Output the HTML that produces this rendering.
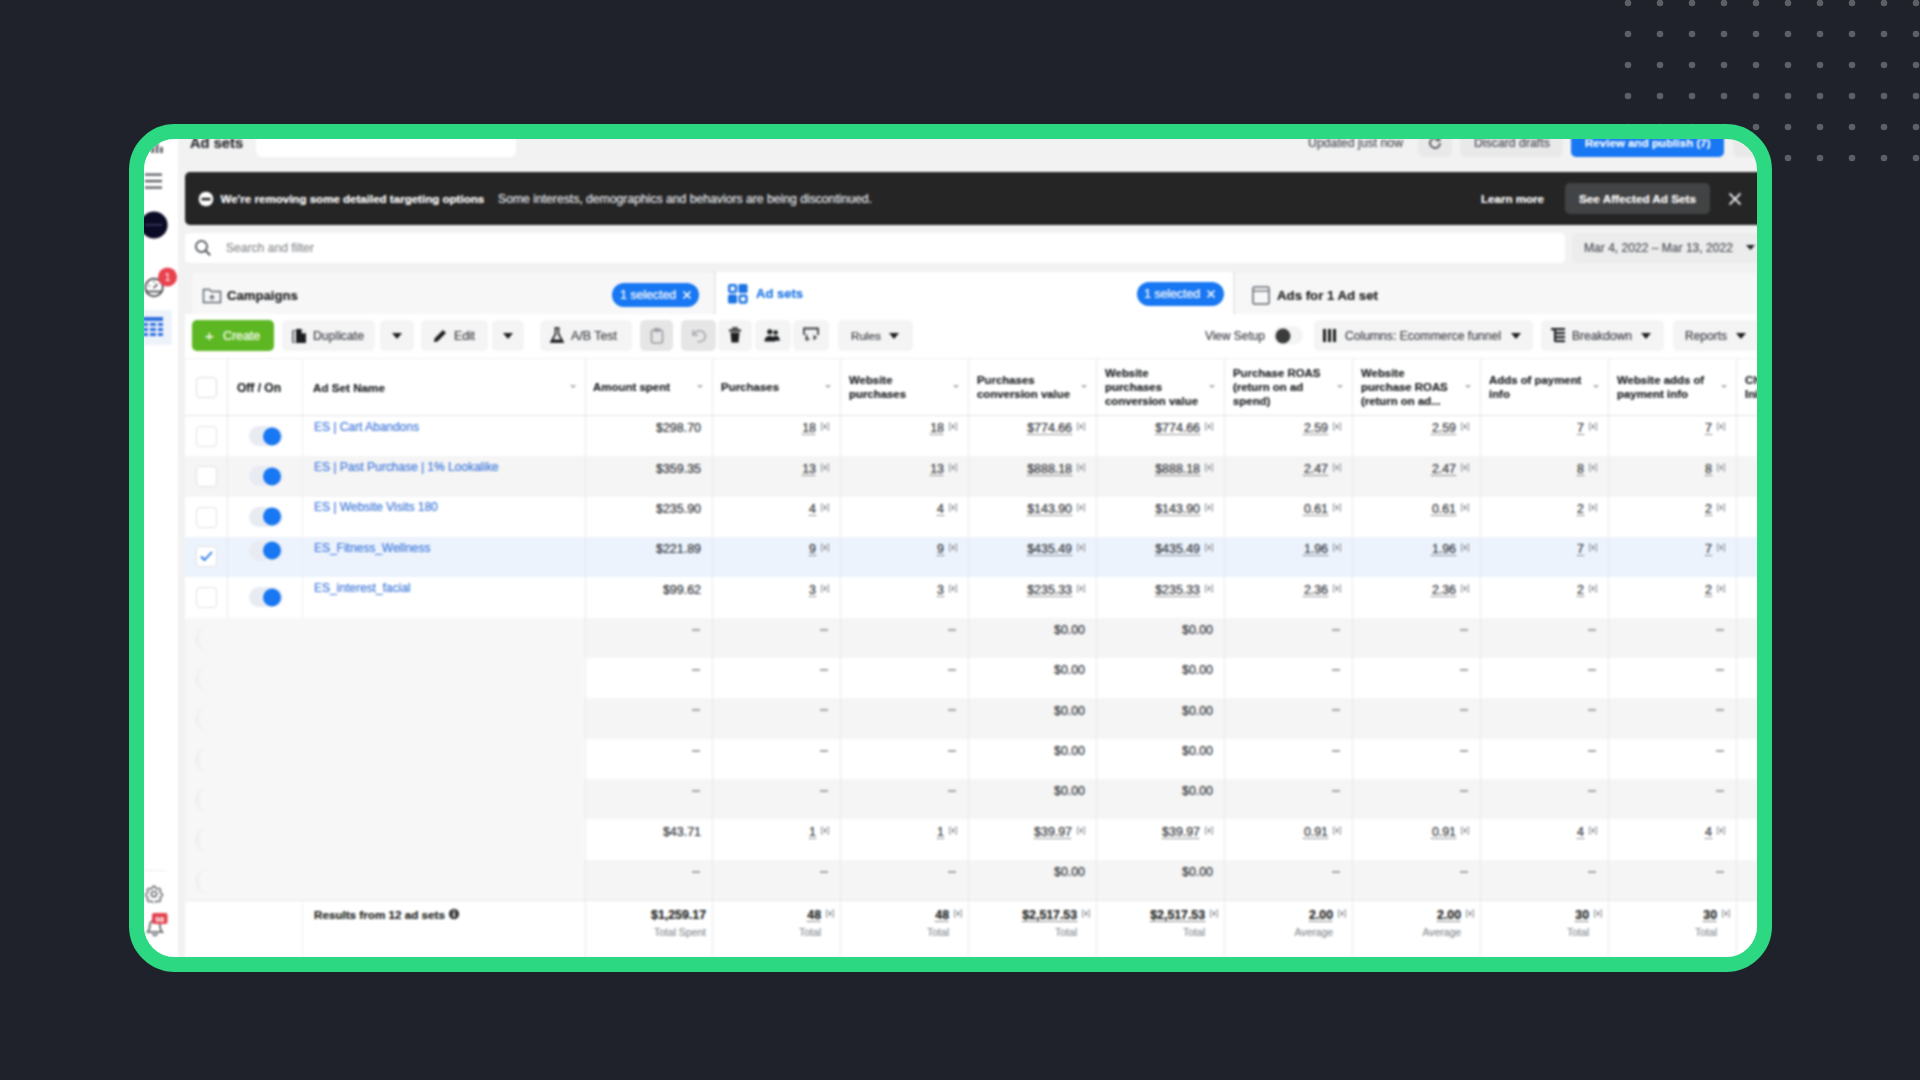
<!DOCTYPE html><html><head><meta charset="utf-8"><style>
*{margin:0;padding:0;box-sizing:border-box}
html,body{width:1920px;height:1080px;overflow:hidden;background:#1f222a;font-family:"Liberation Sans",sans-serif}
.a{position:absolute}
.t{position:absolute;white-space:nowrap;-webkit-text-stroke:0.2px currentColor}
#frame{position:absolute;left:129px;top:124px;width:1643px;height:848px;border:15px solid #2dd882;border-radius:46px;overflow:hidden;background:#f2f2f2}
#pg{position:absolute;left:-144px;top:-139px;width:1920px;height:1080px;filter:blur(0.8px)}
.u{text-decoration:underline dotted;text-underline-offset:2px}
</style></head><body>
<svg class="a" style="left:0;top:0" width="1920" height="200" viewBox="0 0 1920 200"><g fill="#5c5f64"><circle cx="1628" cy="3" r="3.3"/><circle cx="1660" cy="3" r="3.3"/><circle cx="1692" cy="3" r="3.3"/><circle cx="1724" cy="3" r="3.3"/><circle cx="1756" cy="3" r="3.3"/><circle cx="1788" cy="3" r="3.3"/><circle cx="1820" cy="3" r="3.3"/><circle cx="1852" cy="3" r="3.3"/><circle cx="1884" cy="3" r="3.3"/><circle cx="1916" cy="3" r="3.3"/><circle cx="1628" cy="34" r="3.3"/><circle cx="1660" cy="34" r="3.3"/><circle cx="1692" cy="34" r="3.3"/><circle cx="1724" cy="34" r="3.3"/><circle cx="1756" cy="34" r="3.3"/><circle cx="1788" cy="34" r="3.3"/><circle cx="1820" cy="34" r="3.3"/><circle cx="1852" cy="34" r="3.3"/><circle cx="1884" cy="34" r="3.3"/><circle cx="1916" cy="34" r="3.3"/><circle cx="1628" cy="65" r="3.3"/><circle cx="1660" cy="65" r="3.3"/><circle cx="1692" cy="65" r="3.3"/><circle cx="1724" cy="65" r="3.3"/><circle cx="1756" cy="65" r="3.3"/><circle cx="1788" cy="65" r="3.3"/><circle cx="1820" cy="65" r="3.3"/><circle cx="1852" cy="65" r="3.3"/><circle cx="1884" cy="65" r="3.3"/><circle cx="1916" cy="65" r="3.3"/><circle cx="1628" cy="96" r="3.3"/><circle cx="1660" cy="96" r="3.3"/><circle cx="1692" cy="96" r="3.3"/><circle cx="1724" cy="96" r="3.3"/><circle cx="1756" cy="96" r="3.3"/><circle cx="1788" cy="96" r="3.3"/><circle cx="1820" cy="96" r="3.3"/><circle cx="1852" cy="96" r="3.3"/><circle cx="1884" cy="96" r="3.3"/><circle cx="1916" cy="96" r="3.3"/><circle cx="1628" cy="127" r="3.3"/><circle cx="1660" cy="127" r="3.3"/><circle cx="1692" cy="127" r="3.3"/><circle cx="1724" cy="127" r="3.3"/><circle cx="1756" cy="127" r="3.3"/><circle cx="1788" cy="127" r="3.3"/><circle cx="1820" cy="127" r="3.3"/><circle cx="1852" cy="127" r="3.3"/><circle cx="1884" cy="127" r="3.3"/><circle cx="1916" cy="127" r="3.3"/><circle cx="1628" cy="158" r="3.3"/><circle cx="1660" cy="158" r="3.3"/><circle cx="1692" cy="158" r="3.3"/><circle cx="1724" cy="158" r="3.3"/><circle cx="1756" cy="158" r="3.3"/><circle cx="1788" cy="158" r="3.3"/><circle cx="1820" cy="158" r="3.3"/><circle cx="1852" cy="158" r="3.3"/><circle cx="1884" cy="158" r="3.3"/><circle cx="1916" cy="158" r="3.3"/></g></svg>
<svg width="0" height="0" style="position:absolute"><filter id="bl" x="0" y="0" width="100%" height="100%"><feGaussianBlur stdDeviation="1.5"/></filter></svg>
<div id="frame"><div id="pg">
<div class="a" style="left:144px;top:139px;width:34px;height:818px;background:#ffffff;border-radius:0px;"></div>
<svg class="a" style="left:150px;top:139px" width="14" height="15" viewBox="0 0 14 15"><g fill="#6b6f76"><rect x="1" y="6" width="3" height="8"/><rect x="5.5" y="3" width="3" height="11"/><rect x="10" y="8" width="3" height="6"/></g></svg>
<svg class="a" style="left:144px;top:172px" width="20" height="18" viewBox="0 0 20 18"><g fill="#55585e"><rect x="1" y="1.5" width="17" height="2.2"/><rect x="1" y="8" width="17" height="2.2"/><rect x="1" y="14.5" width="17" height="2.2"/></g></svg>
<svg class="a" style="left:140px;top:210px" width="30" height="30" viewBox="0 0 30 30"><circle cx="14" cy="15" r="13.6" fill="#0c0b26"/><rect x="5" y="14.4" width="17" height="1" fill="#55557a"/></svg>
<svg class="a" style="left:142px;top:266px" width="40" height="36" viewBox="0 0 40 36"><circle cx="12" cy="21.5" r="8.8" fill="none" stroke="#3a3d42" stroke-width="1.7"/><path d="M3.8 25.5h16.4" stroke="#3a3d42" stroke-width="1.6"/><path d="M11.5 22l4-3.8" stroke="#3a3d42" stroke-width="1.5"/><path d="M6.5 19.5l1.4.6M12 15v1.5" stroke="#3a3d42" stroke-width="1.2"/><circle cx="25.5" cy="11" r="9.5" fill="#e8424f"/><text x="25.5" y="15" font-size="10" fill="#fff" text-anchor="middle" font-family="Liberation Sans">1</text></svg>
<div class="a" style="left:144px;top:310px;width:28px;height:35px;background:#eef3fb;border-radius:0px;"></div>
<svg class="a" style="left:143px;top:317px" width="22" height="20" viewBox="0 0 22 20"><g fill="#2d6fe0"><rect x="0" y="0" width="20" height="4"/><rect x="0" y="6" width="5" height="3"/><rect x="7" y="6" width="6" height="3"/><rect x="15" y="6" width="5" height="3"/><rect x="0" y="11" width="5" height="3"/><rect x="7" y="11" width="6" height="3"/><rect x="15" y="11" width="5" height="3"/><rect x="0" y="16" width="5" height="3"/><rect x="7" y="16" width="6" height="3"/><rect x="15" y="16" width="5" height="3"/></g></svg>
<div class="a" style="left:145px;top:870px;width:21px;height:1px;background:#ececec;border-radius:0px;"></div>
<svg class="a" style="left:145px;top:884.5px" width="18" height="18" viewBox="0 0 18 18"><g transform="scale(0.9)"><path d="M8.6 1.5h2.8l.5 2.3 1.6.8 2.1-1.1 2 2-1.1 2.1.7 1.6 2.3.5v2.8l-2.3.5-.7 1.6 1.1 2.1-2 2-2.1-1.1-1.6.7-.5 2.3h-2.8l-.5-2.3-1.6-.7-2.1 1.1-2-2 1.1-2.1-.7-1.6-2.3-.5v-2.8l2.3-.5.7-1.6-1.1-2.1 2-2 2.1 1.1 1.6-.8z" fill="none" stroke="#55585d" stroke-width="1.4"/><circle cx="10" cy="10" r="3" fill="none" stroke="#55585d" stroke-width="1.5"/></g></svg>
<svg class="a" style="left:144px;top:910px" width="30" height="30" viewBox="0 0 30 30"><path d="M3.5 22c1.8-1.5 2.2-3.5 2.4-7a5 5 0 0 1 10 0c.2 3.5.6 5.5 2.4 7z" fill="none" stroke="#55585d" stroke-width="1.6"/><path d="M9 23.5a2 2 0 0 0 4 0" stroke="#55585d" stroke-width="1.4" fill="none"/><rect x="8" y="3" width="15.5" height="11" rx="2" fill="#e2404c"/><text x="15.7" y="11.5" font-size="8" fill="#fff" text-anchor="middle" font-family="Liberation Sans" font-weight="700">98</text></svg>
<div class="t" style="left:190px;top:134.77px;font-size:14.7px;line-height:17.64px;font-weight:700;color:#2b2d31;">Ad sets</div>
<div class="a" style="left:256px;top:125px;width:260px;height:32px;background:#ffffff;border-radius:6px;"></div>
<div class="t" style="left:1308px;top:135.81px;font-size:12.3px;line-height:14.76px;font-weight:400;color:#4b4f56;">Updated just now</div>
<div class="a" style="left:1418px;top:125px;width:34px;height:32px;background:#e9e9e9;border-radius:5px;"></div>
<svg class="a" style="left:1427px;top:135px" width="16" height="16" viewBox="0 0 16 16"><path d="M13 8a5 5 0 1 1-1.5-3.6" fill="none" stroke="#55585e" stroke-width="1.8"/><path d="M12.5 1.5v4h-4" fill="none" stroke="#55585e" stroke-width="1.6"/></svg>
<div class="a" style="left:1460px;top:125px;width:103px;height:32px;background:#e9e9e9;border-radius:5px;"></div>
<div class="t" style="left:1474px;top:135.81px;font-size:12.3px;line-height:14.76px;font-weight:400;color:#4b4f56;">Discard drafts</div>
<div class="a" style="left:1571px;top:125px;width:153px;height:32px;background:#1877f2;border-radius:5px;"></div>
<div class="t" style="left:1585px;top:136.20px;font-size:11.6px;line-height:13.92px;font-weight:700;color:#ffffff;">Review and publish (7)</div>
<div class="a" style="left:1733px;top:125px;width:67px;height:32px;background:#e9e9e9;border-radius:5px;"></div>
<div class="a" style="left:185px;top:172px;width:1615px;height:53px;background:#252525;border-radius:5px;"></div>
<svg class="a" style="left:198px;top:191px" width="16" height="16" viewBox="0 0 16 16"><circle cx="8" cy="8" r="7.3" fill="#fff"/><rect x="3.5" y="6.8" width="9" height="2.6" fill="#252525"/></svg>
<div class="t" style="left:220.5px;top:192.53px;font-size:11.56px;line-height:13.87px;font-weight:700;color:#ffffff;">We&#39;re removing some detailed targeting options</div>
<div class="t" style="left:498px;top:192.17px;font-size:12.19px;line-height:14.63px;font-weight:400;color:#e4e6eb;">Some interests, demographics and behaviors are being discontinued.</div>
<div class="t" style="left:1481px;top:192.52px;font-size:11.57px;line-height:13.88px;font-weight:700;color:#ffffff;">Learn more</div>
<div class="a" style="left:1565px;top:183px;width:145px;height:31px;background:#424344;border-radius:5px;"></div>
<div class="t" style="left:1579px;top:192.44px;font-size:11.72px;line-height:14.06px;font-weight:700;color:#ffffff;">See Affected Ad Sets</div>
<svg class="a" style="left:1728px;top:192px" width="14" height="14" viewBox="0 0 14 14"><path d="M1.5 1.5l11 11M12.5 1.5l-11 11" stroke="#e4e6eb" stroke-width="1.8"/></svg>
<div class="a" style="left:185px;top:233px;width:1380px;height:30px;background:#ffffff;border-radius:5px;"></div>
<svg class="a" style="left:194px;top:239px" width="18" height="18" viewBox="0 0 18 18"><circle cx="7.5" cy="7.5" r="5.6" fill="none" stroke="#4b4f56" stroke-width="1.7"/><path d="M11.6 11.6l4.6 4.6" stroke="#4b4f56" stroke-width="2"/></svg>
<div class="t" style="left:226px;top:241.02px;font-size:12.1px;line-height:14.52px;font-weight:400;color:#8a8d91;">Search and filter</div>
<div class="a" style="left:1572px;top:233px;width:228px;height:30px;background:#ececec;border-radius:5px;"></div>
<div class="t" style="left:1584px;top:241.04px;font-size:12.07px;line-height:14.48px;font-weight:400;color:#4b4f56;">Mar 4, 2022 &#8211; Mar 13, 2022</div>
<svg class="a" style="left:1745px;top:244px" width="12" height="8" viewBox="0 0 12 8"><path d="M1 1h9l-4.5 5z" fill="#1c1e21"/></svg>
<div class="a" style="left:716px;top:272px;width:517px;height:44px;background:#ffffff;border-radius:0px;"></div>
<div class="a" style="left:192px;top:273px;width:522px;height:41px;background:#f7f7f7;border-radius:4px;"></div>
<div class="a" style="left:1235px;top:273px;width:565px;height:41px;background:#f7f7f7;border-radius:4px;"></div>
<div class="a" style="left:714px;top:272px;width:2px;height:44px;background:#eaeaea;border-radius:0px;"></div>
<div class="a" style="left:1233px;top:272px;width:2px;height:44px;background:#eaeaea;border-radius:0px;"></div>
<svg class="a" style="left:201px;top:285px" width="22" height="20" viewBox="0 0 22 20"><path d="M2.5 4.5h6l2 2h9v11h-17z" fill="none" stroke="#606770" stroke-width="1.5"/><path d="M11 15.5l0-5M8.5 13l2.5-2.5 2.5 2.5" fill="none" stroke="#606770" stroke-width="1.3"/></svg>
<div class="t" style="left:227px;top:287.63px;font-size:13.17px;line-height:15.8px;font-weight:700;color:#1c1e21;">Campaigns</div>
<div class="a" style="left:612px;top:283px;width:87px;height:24px;background:#1877f2;border-radius:12px;"></div>
<div class="t" style="left:620px;top:288.11px;font-size:12.3px;line-height:14.76px;font-weight:400;color:#ffffff;">1 selected</div>
<svg class="a" style="left:681px;top:289px" width="12" height="12" viewBox="0 0 12 12"><path d="M2.5 2.5l7 7M9.5 2.5l-7 7" stroke="#fff" stroke-width="1.6"/></svg>
<svg class="a" style="left:727px;top:283px" width="22" height="22" viewBox="0 0 22 22"><g fill="#1b74e4"><rect x="2.2" y="2.2" width="6.8" height="6.8" rx="1.2" fill="none" stroke="#1b74e4" stroke-width="2.4"/><rect x="11.5" y="1" width="9" height="9" rx="1.5"/><rect x="1" y="11.5" width="9" height="9" rx="1.5"/><rect x="12.7" y="12.7" width="6.8" height="6.8" rx="1.2" fill="none" stroke="#1b74e4" stroke-width="2.4"/></g></svg>
<div class="t" style="left:756px;top:286.22px;font-size:13.0px;line-height:15.6px;font-weight:700;color:#1b74e4;">Ad sets</div>
<div class="a" style="left:1137px;top:282px;width:87px;height:24px;background:#1877f2;border-radius:12px;"></div>
<div class="t" style="left:1144px;top:287.11px;font-size:12.3px;line-height:14.76px;font-weight:400;color:#ffffff;">1 selected</div>
<svg class="a" style="left:1205px;top:288px" width="12" height="12" viewBox="0 0 12 12"><path d="M2.5 2.5l7 7M9.5 2.5l-7 7" stroke="#fff" stroke-width="1.6"/></svg>
<svg class="a" style="left:1252px;top:286px" width="18" height="19" viewBox="0 0 18 19"><rect x="1" y="1" width="16" height="17" rx="1.5" fill="none" stroke="#606770" stroke-width="1.5"/><path d="M1 5h16" stroke="#606770" stroke-width="1.3"/></svg>
<div class="t" style="left:1277px;top:287.58px;font-size:13.24px;line-height:15.89px;font-weight:700;color:#1c1e21;">Ads for 1 Ad set</div>
<div class="a" style="left:185px;top:314px;width:1615px;height:44px;background:#ffffff;border-radius:0px;"></div>
<div class="a" style="left:192px;top:320px;width:82px;height:31px;background:#5db722;border-radius:5px;"></div>
<div class="t" style="left:205px;top:327.10px;font-size:15px;line-height:18.0px;font-weight:400;color:#ffffff;">+</div>
<div class="t" style="left:223px;top:328.56px;font-size:12.4px;line-height:14.88px;font-weight:400;color:#ffffff;">Create</div>
<div class="a" style="left:282px;top:320px;width:93px;height:31px;background:#f4f4f4;border-radius:5px;"></div>
<div class="a" style="left:380px;top:320px;width:34px;height:31px;background:#f4f4f4;border-radius:5px;"></div>
<svg class="a" style="left:289px;top:326px" width="20" height="20" viewBox="0 0 20 20"><path d="M4 4.5v12" stroke="#3a3d42" stroke-width="1.4" fill="none"/><path d="M4 4.5h2M4 16.5h2" stroke="#3a3d42" stroke-width="1.2"/><path d="M7 3h6l4 4v10h-10z" fill="#1c1e21"/><path d="M13 3v4h4" fill="#fff" stroke="#fff" stroke-width=".6"/></svg>
<div class="t" style="left:313px;top:328.65px;font-size:12.23px;line-height:14.68px;font-weight:400;color:#3e4147;">Duplicate</div>
<svg class="a" style="left:391px;top:332px" width="12" height="8" viewBox="0 0 12 8"><path d="M1 1h10l-5 6z" fill="#1c1e21"/></svg>
<div class="a" style="left:421px;top:320px;width:67px;height:31px;background:#f4f4f4;border-radius:5px;"></div>
<div class="a" style="left:492px;top:320px;width:32px;height:31px;background:#f4f4f4;border-radius:5px;"></div>
<svg class="a" style="left:431px;top:327px" width="18" height="18" viewBox="0 0 18 18"><path d="M3 15l1-4 8-8 3 3-8 8z" fill="#1c1e21"/><path d="M3 15l1-4 3 3z" fill="#1c1e21"/></svg>
<div class="t" style="left:454px;top:328.67px;font-size:12.2px;line-height:14.64px;font-weight:400;color:#3e4147;">Edit</div>
<svg class="a" style="left:502px;top:332px" width="12" height="8" viewBox="0 0 12 8"><path d="M1 1h10l-5 6z" fill="#1c1e21"/></svg>
<div class="a" style="left:540px;top:320px;width:92px;height:31px;background:#f4f4f4;border-radius:5px;"></div>
<svg class="a" style="left:549px;top:326px" width="16" height="19" viewBox="0 0 16 19"><path d="M5.5 2h5M6.5 2v6l-4.5 8h12l-4.5-8v-6" fill="none" stroke="#1c1e21" stroke-width="1.6"/><path d="M3.5 13.5h9l1.5 3h-12z" fill="#1c1e21"/></svg>
<div class="t" style="left:571px;top:328.55px;font-size:12.41px;line-height:14.89px;font-weight:400;color:#3e4147;">A/B Test</div>
<div class="a" style="left:640px;top:320px;width:33px;height:31px;background:#e6e6e6;border-radius:5px;"></div>
<svg class="a" style="left:650px;top:327px" width="14" height="17" viewBox="0 0 14 17"><rect x="1.5" y="3" width="11" height="13" rx="2" fill="none" stroke="#9a9da2" stroke-width="1.6"/><rect x="4" y="1" width="6" height="4" rx="1" fill="#9a9da2"/></svg>
<div class="a" style="left:681px;top:320px;width:35px;height:31px;background:#e6e6e6;border-radius:5px;"></div>
<svg class="a" style="left:690px;top:327px" width="18" height="17" viewBox="0 0 18 17"><path d="M3 3v5h5" fill="none" stroke="#a3a6ab" stroke-width="1.4"/><path d="M3.5 8a6 5.5 0 1 1 4 6.5" fill="none" stroke="#a3a6ab" stroke-width="1.6"/></svg>
<div class="a" style="left:718px;top:320px;width:34px;height:31px;background:#f4f4f4;border-radius:5px;"></div>
<svg class="a" style="left:727px;top:326px" width="16" height="18" viewBox="0 0 16 18"><path d="M2 4.5h12" stroke="#1c1e21" stroke-width="2"/><path d="M6 3.5v-1.5h4v1.5" fill="none" stroke="#1c1e21" stroke-width="1.6"/><path d="M3.5 6.5h9l-1 10h-7z" fill="#1c1e21"/></svg>
<div class="a" style="left:755px;top:320px;width:36px;height:31px;background:#f4f4f4;border-radius:5px;"></div>
<svg class="a" style="left:763px;top:326px" width="18" height="18" viewBox="0 0 18 18"><g fill="#1c1e21"><circle cx="6.8" cy="5.8" r="2.6"/><circle cx="12.6" cy="6.5" r="2.3"/><path d="M1.5 15.5c0-3.5 2-5.5 5.3-5.5s5.3 2 5.3 5.5z"/><path d="M9.5 11.5c1-1.3 2-1.8 3.3-1.8 2.5 0 4 2 4 5h-5.5z"/></g></svg>
<div class="a" style="left:793px;top:320px;width:36px;height:31px;background:#f4f4f4;border-radius:5px;"></div>
<svg class="a" style="left:802px;top:326px" width="18" height="18" viewBox="0 0 18 18"><path d="M2 9V2.5h14V9" fill="none" stroke="#3a3d42" stroke-width="1.8"/><path d="M4.5 8.5v4.5h3" fill="none" stroke="#3a3d42" stroke-width="1.6"/><path d="M5.5 15.5l-2.5-2.5 2.5-2.5z" fill="#3a3d42"/><path d="M11.5 8.5l3.5 3-3.5 3z" fill="#3a3d42"/></svg>
<div class="a" style="left:838px;top:320px;width:75px;height:31px;background:#f4f4f4;border-radius:5px;"></div>
<div class="t" style="left:851px;top:328.93px;font-size:11.73px;line-height:14.08px;font-weight:400;color:#3e4147;">Rules</div>
<svg class="a" style="left:888px;top:332px" width="12" height="8" viewBox="0 0 12 8"><path d="M1 1h10l-5 6z" fill="#1c1e21"/></svg>
<div class="t" style="left:1205px;top:328.84px;font-size:11.9px;line-height:14.28px;font-weight:400;color:#3e4147;">View Setup</div>
<div class="a" style="left:1273px;top:326px;width:30px;height:19px;background:#f4f4f4;border-radius:10px;"></div>
<svg class="a" style="left:1274px;top:327px" width="18" height="18" viewBox="0 0 18 18"><circle cx="9" cy="9" r="7.5" fill="#3a3b3c"/></svg>
<div class="a" style="left:1314px;top:320px;width:219px;height:31px;background:#f4f4f4;border-radius:5px;"></div>
<svg class="a" style="left:1322px;top:328px" width="17" height="15" viewBox="0 0 17 15"><g fill="#1c1e21"><rect x="1" y="1" width="3" height="13"/><rect x="6" y="1" width="3" height="13"/><rect x="11" y="1" width="3" height="13"/></g></svg>
<div class="t" style="left:1345px;top:328.70px;font-size:12.15px;line-height:14.58px;font-weight:400;color:#3e4147;">Columns: Ecommerce funnel</div>
<svg class="a" style="left:1510px;top:332px" width="12" height="8" viewBox="0 0 12 8"><path d="M1 1h10l-5 6z" fill="#1c1e21"/></svg>
<div class="a" style="left:1541px;top:320px;width:123px;height:31px;background:#f4f4f4;border-radius:5px;"></div>
<svg class="a" style="left:1550px;top:327px" width="17" height="17" viewBox="0 0 17 17"><g fill="#1c1e21"><rect x="1" y="1" width="14" height="2.2"/><rect x="4" y="5" width="11" height="2.2"/><rect x="6" y="9" width="9" height="2.2"/><rect x="6" y="13" width="9" height="2.2"/><rect x="4" y="3" width="2" height="12"/></g></svg>
<div class="t" style="left:1572px;top:328.78px;font-size:11.99px;line-height:14.39px;font-weight:400;color:#3e4147;">Breakdown</div>
<svg class="a" style="left:1640px;top:332px" width="12" height="8" viewBox="0 0 12 8"><path d="M1 1h10l-5 6z" fill="#1c1e21"/></svg>
<div class="a" style="left:1673px;top:320px;width:127px;height:31px;background:#f4f4f4;border-radius:5px;"></div>
<div class="t" style="left:1685px;top:328.78px;font-size:12.0px;line-height:14.4px;font-weight:400;color:#3e4147;">Reports</div>
<svg class="a" style="left:1735px;top:332px" width="12" height="8" viewBox="0 0 12 8"><path d="M1 1h10l-5 6z" fill="#1c1e21"/></svg>
<div class="a" style="left:185px;top:358px;width:1615px;height:599px;background:#ffffff;border-radius:0px;"></div>
<div class="a" style="left:185px;top:456.33px;width:1615px;height:40.33000000000004px;background:#f5f5f5;border-radius:0px;"></div>
<div class="a" style="left:185px;top:536.99px;width:1615px;height:40.33000000000004px;background:#ecf3fd;border-radius:0px;"></div>
<div class="a" style="left:185px;top:617.65px;width:1615px;height:40.33000000000004px;background:#f5f5f5;border-radius:0px;"></div>
<div class="a" style="left:185px;top:698.31px;width:1615px;height:40.33000000000004px;background:#f5f5f5;border-radius:0px;"></div>
<div class="a" style="left:185px;top:778.97px;width:1615px;height:40.32999999999993px;background:#f5f5f5;border-radius:0px;"></div>
<div class="a" style="left:185px;top:859.63px;width:1615px;height:40.33000000000004px;background:#f5f5f5;border-radius:0px;"></div>
<div class="a" style="left:226.5px;top:358px;width:1.0px;height:542px;background:#e9e9e9;border-radius:0px;"></div>
<div class="a" style="left:301.5px;top:358px;width:1.0px;height:599px;background:#efefef;border-radius:0px;"></div>
<div class="a" style="left:584.5px;top:358px;width:1.0px;height:599px;background:#e9e9e9;border-radius:0px;"></div>
<div class="a" style="left:711.5px;top:358px;width:1.0px;height:599px;background:#e9e9e9;border-radius:0px;"></div>
<div class="a" style="left:839.5px;top:358px;width:1.0px;height:599px;background:#e9e9e9;border-radius:0px;"></div>
<div class="a" style="left:967.5px;top:358px;width:1.0px;height:599px;background:#e9e9e9;border-radius:0px;"></div>
<div class="a" style="left:1095.5px;top:358px;width:1.0px;height:599px;background:#e9e9e9;border-radius:0px;"></div>
<div class="a" style="left:1223.5px;top:358px;width:1.0px;height:599px;background:#e9e9e9;border-radius:0px;"></div>
<div class="a" style="left:1351.5px;top:358px;width:1.0px;height:599px;background:#e9e9e9;border-radius:0px;"></div>
<div class="a" style="left:1479.5px;top:358px;width:1.0px;height:599px;background:#e9e9e9;border-radius:0px;"></div>
<div class="a" style="left:1607.5px;top:358px;width:1.0px;height:599px;background:#e9e9e9;border-radius:0px;"></div>
<div class="a" style="left:1735.5px;top:358px;width:1.0px;height:599px;background:#e9e9e9;border-radius:0px;"></div>
<div class="a" style="left:1863.5px;top:358px;width:1.0px;height:599px;background:#e9e9e9;border-radius:0px;"></div>
<div class="a" style="left:185px;top:617.65px;width:399px;height:283.35px;background:#f7f7f7;border-radius:0px;"></div>
<div class="a" style="left:196px;top:625.65px;width:64px;height:26.0px;background:transparent;border-radius:14px;border-left:2px solid #ebebeb;filter:blur(1px)"></div>
<div class="a" style="left:196px;top:665.98px;width:64px;height:26.0px;background:transparent;border-radius:14px;border-left:2px solid #ebebeb;filter:blur(1px)"></div>
<div class="a" style="left:196px;top:706.31px;width:64px;height:26.0px;background:transparent;border-radius:14px;border-left:2px solid #ebebeb;filter:blur(1px)"></div>
<div class="a" style="left:196px;top:746.64px;width:64px;height:26.0px;background:transparent;border-radius:14px;border-left:2px solid #ebebeb;filter:blur(1px)"></div>
<div class="a" style="left:196px;top:786.97px;width:64px;height:26.0px;background:transparent;border-radius:14px;border-left:2px solid #ebebeb;filter:blur(1px)"></div>
<div class="a" style="left:196px;top:827.3px;width:64px;height:26.0px;background:transparent;border-radius:14px;border-left:2px solid #ebebeb;filter:blur(1px)"></div>
<div class="a" style="left:196px;top:867.63px;width:64px;height:26.0px;background:transparent;border-radius:14px;border-left:2px solid #ebebeb;filter:blur(1px)"></div>
<div class="a" style="left:185px;top:415px;width:1615px;height:1px;background:#e3e3e3;border-radius:0px;"></div>
<div class="a" style="left:185px;top:357.5px;width:1615px;height:1.0px;background:#efefef;border-radius:0px;"></div>
<div class="a" style="left:185px;top:900px;width:1615px;height:1px;background:#e8e8e8;border-radius:0px;"></div>
<div class="a" style="left:196px;top:377px;width:21px;height:21px;background:#ffffff;border-radius:4px;border:1.5px solid #dcdcdc"></div>
<div class="t" style="left:237px;top:380.98px;font-size:12.0px;line-height:14.4px;font-weight:700;color:#1c1e21;">Off / On</div>
<div class="t" style="left:313px;top:381.17px;font-size:11.67px;line-height:14.0px;font-weight:700;color:#1c1e21;">Ad Set Name</div>
<div class="t" style="left:593px;top:381.28px;font-size:11.46px;line-height:13.75px;font-weight:700;color:#1c1e21;">Amount spent</div>
<div class="t" style="left:721px;top:381.28px;font-size:11.47px;line-height:13.76px;font-weight:700;color:#1c1e21;">Purchases</div>
<div class="t" style="left:849px;top:374.32px;font-size:11.4px;line-height:13.68px;font-weight:700;color:#1c1e21;">Website</div>
<div class="t" style="left:849px;top:388.32px;font-size:11.4px;line-height:13.68px;font-weight:700;color:#1c1e21;">purchases</div>
<div class="t" style="left:977px;top:374.32px;font-size:11.4px;line-height:13.68px;font-weight:700;color:#1c1e21;">Purchases</div>
<div class="t" style="left:977px;top:388.32px;font-size:11.4px;line-height:13.68px;font-weight:700;color:#1c1e21;">conversion value</div>
<div class="t" style="left:1105px;top:367.32px;font-size:11.4px;line-height:13.68px;font-weight:700;color:#1c1e21;">Website</div>
<div class="t" style="left:1105px;top:381.32px;font-size:11.4px;line-height:13.68px;font-weight:700;color:#1c1e21;">purchases</div>
<div class="t" style="left:1105px;top:395.32px;font-size:11.4px;line-height:13.68px;font-weight:700;color:#1c1e21;">conversion value</div>
<div class="t" style="left:1233px;top:367.32px;font-size:11.4px;line-height:13.68px;font-weight:700;color:#1c1e21;">Purchase ROAS</div>
<div class="t" style="left:1233px;top:381.32px;font-size:11.4px;line-height:13.68px;font-weight:700;color:#1c1e21;">(return on ad</div>
<div class="t" style="left:1233px;top:395.32px;font-size:11.4px;line-height:13.68px;font-weight:700;color:#1c1e21;">spend)</div>
<div class="t" style="left:1361px;top:367.32px;font-size:11.4px;line-height:13.68px;font-weight:700;color:#1c1e21;">Website</div>
<div class="t" style="left:1361px;top:381.32px;font-size:11.4px;line-height:13.68px;font-weight:700;color:#1c1e21;">purchase ROAS</div>
<div class="t" style="left:1361px;top:395.32px;font-size:11.4px;line-height:13.68px;font-weight:700;color:#1c1e21;">(return on ad...</div>
<div class="t" style="left:1489px;top:374.32px;font-size:11.4px;line-height:13.68px;font-weight:700;color:#1c1e21;">Adds of payment</div>
<div class="t" style="left:1489px;top:388.32px;font-size:11.4px;line-height:13.68px;font-weight:700;color:#1c1e21;">info</div>
<div class="t" style="left:1617px;top:374.32px;font-size:11.4px;line-height:13.68px;font-weight:700;color:#1c1e21;">Website adds of</div>
<div class="t" style="left:1617px;top:388.32px;font-size:11.4px;line-height:13.68px;font-weight:700;color:#1c1e21;">payment info</div>
<div class="t" style="left:1745px;top:374.32px;font-size:11.4px;line-height:13.68px;font-weight:700;color:#1c1e21;">Checkouts</div>
<div class="t" style="left:1745px;top:388.32px;font-size:11.4px;line-height:13.68px;font-weight:700;color:#1c1e21;">Initiated</div>
<svg class="a" style="left:569px;top:384px" width="8" height="6" viewBox="0 0 8 6"><path d="M1 1h6l-3 3.5z" fill="#b0b3b8"/></svg>
<svg class="a" style="left:696px;top:384px" width="8" height="6" viewBox="0 0 8 6"><path d="M1 1h6l-3 3.5z" fill="#b0b3b8"/></svg>
<svg class="a" style="left:824px;top:384px" width="8" height="6" viewBox="0 0 8 6"><path d="M1 1h6l-3 3.5z" fill="#b0b3b8"/></svg>
<svg class="a" style="left:952px;top:384px" width="8" height="6" viewBox="0 0 8 6"><path d="M1 1h6l-3 3.5z" fill="#b0b3b8"/></svg>
<svg class="a" style="left:1080px;top:384px" width="8" height="6" viewBox="0 0 8 6"><path d="M1 1h6l-3 3.5z" fill="#b0b3b8"/></svg>
<svg class="a" style="left:1208px;top:384px" width="8" height="6" viewBox="0 0 8 6"><path d="M1 1h6l-3 3.5z" fill="#b0b3b8"/></svg>
<svg class="a" style="left:1336px;top:384px" width="8" height="6" viewBox="0 0 8 6"><path d="M1 1h6l-3 3.5z" fill="#b0b3b8"/></svg>
<svg class="a" style="left:1464px;top:384px" width="8" height="6" viewBox="0 0 8 6"><path d="M1 1h6l-3 3.5z" fill="#b0b3b8"/></svg>
<svg class="a" style="left:1592px;top:384px" width="8" height="6" viewBox="0 0 8 6"><path d="M1 1h6l-3 3.5z" fill="#b0b3b8"/></svg>
<svg class="a" style="left:1720px;top:384px" width="8" height="6" viewBox="0 0 8 6"><path d="M1 1h6l-3 3.5z" fill="#b0b3b8"/></svg>
<div class="a" style="left:196px;top:426.0px;width:21px;height:21.0px;background:#ffffff;border-radius:4px;border:1.5px solid #e2e2e2"></div>
<div class="a" style="left:249px;top:426.0px;width:34px;height:20.0px;background:#e8ecf2;border-radius:10px;"></div>
<svg class="a" style="left:261px;top:426px" width="22" height="21" viewBox="0 0 22 21"><circle cx="11" cy="10.5" r="9" fill="#1877f2"/></svg>
<div class="t" style="left:314px;top:419.79px;font-size:11.98px;line-height:14.38px;font-weight:400;color:#3f7bdc;">ES | Cart Abandons</div>
<div class="t" style="right:1219px;top:421.33px;font-size:12.45px;line-height:14.94px;font-weight:400;color:#2f3237;">$298.70</div>
<div class="t" style="right:1104px;top:421.36px;font-size:12.4px;line-height:14.88px;font-weight:400;color:#2f3237;"><span class="u">18</span></div>
<svg class="a" style="left:820px;top:422px" width="10" height="9" viewBox="0 0 10 9"><path d="M1.5 1v7M8.5 1v7M1.5 1h1.5M1.5 8h1.5M7 1h1.5M7 8h1.5" stroke="#8d9096" stroke-width="1" fill="none"/><rect x="3.8" y="2.5" width="2.4" height="4" fill="#8d9096"/></svg>
<div class="t" style="right:976px;top:421.36px;font-size:12.4px;line-height:14.88px;font-weight:400;color:#2f3237;"><span class="u">18</span></div>
<svg class="a" style="left:948px;top:422px" width="10" height="9" viewBox="0 0 10 9"><path d="M1.5 1v7M8.5 1v7M1.5 1h1.5M1.5 8h1.5M7 1h1.5M7 8h1.5" stroke="#8d9096" stroke-width="1" fill="none"/><rect x="3.8" y="2.5" width="2.4" height="4" fill="#8d9096"/></svg>
<div class="t" style="right:848px;top:421.36px;font-size:12.4px;line-height:14.88px;font-weight:400;color:#2f3237;"><span class="u">$774.66</span></div>
<svg class="a" style="left:1076px;top:422px" width="10" height="9" viewBox="0 0 10 9"><path d="M1.5 1v7M8.5 1v7M1.5 1h1.5M1.5 8h1.5M7 1h1.5M7 8h1.5" stroke="#8d9096" stroke-width="1" fill="none"/><rect x="3.8" y="2.5" width="2.4" height="4" fill="#8d9096"/></svg>
<div class="t" style="right:720px;top:421.36px;font-size:12.4px;line-height:14.88px;font-weight:400;color:#2f3237;"><span class="u">$774.66</span></div>
<svg class="a" style="left:1204px;top:422px" width="10" height="9" viewBox="0 0 10 9"><path d="M1.5 1v7M8.5 1v7M1.5 1h1.5M1.5 8h1.5M7 1h1.5M7 8h1.5" stroke="#8d9096" stroke-width="1" fill="none"/><rect x="3.8" y="2.5" width="2.4" height="4" fill="#8d9096"/></svg>
<div class="t" style="right:592px;top:421.36px;font-size:12.4px;line-height:14.88px;font-weight:400;color:#2f3237;"><span class="u">2.59</span></div>
<svg class="a" style="left:1332px;top:422px" width="10" height="9" viewBox="0 0 10 9"><path d="M1.5 1v7M8.5 1v7M1.5 1h1.5M1.5 8h1.5M7 1h1.5M7 8h1.5" stroke="#8d9096" stroke-width="1" fill="none"/><rect x="3.8" y="2.5" width="2.4" height="4" fill="#8d9096"/></svg>
<div class="t" style="right:464px;top:421.36px;font-size:12.4px;line-height:14.88px;font-weight:400;color:#2f3237;"><span class="u">2.59</span></div>
<svg class="a" style="left:1460px;top:422px" width="10" height="9" viewBox="0 0 10 9"><path d="M1.5 1v7M8.5 1v7M1.5 1h1.5M1.5 8h1.5M7 1h1.5M7 8h1.5" stroke="#8d9096" stroke-width="1" fill="none"/><rect x="3.8" y="2.5" width="2.4" height="4" fill="#8d9096"/></svg>
<div class="t" style="right:336px;top:421.36px;font-size:12.4px;line-height:14.88px;font-weight:400;color:#2f3237;"><span class="u">7</span></div>
<svg class="a" style="left:1588px;top:422px" width="10" height="9" viewBox="0 0 10 9"><path d="M1.5 1v7M8.5 1v7M1.5 1h1.5M1.5 8h1.5M7 1h1.5M7 8h1.5" stroke="#8d9096" stroke-width="1" fill="none"/><rect x="3.8" y="2.5" width="2.4" height="4" fill="#8d9096"/></svg>
<div class="t" style="right:208px;top:421.36px;font-size:12.4px;line-height:14.88px;font-weight:400;color:#2f3237;"><span class="u">7</span></div>
<svg class="a" style="left:1716px;top:422px" width="10" height="9" viewBox="0 0 10 9"><path d="M1.5 1v7M8.5 1v7M1.5 1h1.5M1.5 8h1.5M7 1h1.5M7 8h1.5" stroke="#8d9096" stroke-width="1" fill="none"/><rect x="3.8" y="2.5" width="2.4" height="4" fill="#8d9096"/></svg>
<div class="a" style="left:196px;top:466.33px;width:21px;height:21.0px;background:#ffffff;border-radius:4px;border:1.5px solid #e2e2e2"></div>
<div class="a" style="left:249px;top:466.33px;width:34px;height:20.0px;background:#e8ecf2;border-radius:10px;"></div>
<svg class="a" style="left:261px;top:466px" width="22" height="21" viewBox="0 0 22 21"><circle cx="11" cy="10.5" r="9" fill="#1877f2"/></svg>
<div class="t" style="left:314px;top:460.12px;font-size:11.98px;line-height:14.38px;font-weight:400;color:#3f7bdc;">ES | Past Purchase | 1% Lookalike</div>
<div class="t" style="right:1219px;top:461.66px;font-size:12.45px;line-height:14.94px;font-weight:400;color:#2f3237;">$359.35</div>
<div class="t" style="right:1104px;top:461.69px;font-size:12.4px;line-height:14.88px;font-weight:400;color:#2f3237;"><span class="u">13</span></div>
<svg class="a" style="left:820px;top:463px" width="10" height="9" viewBox="0 0 10 9"><path d="M1.5 1v7M8.5 1v7M1.5 1h1.5M1.5 8h1.5M7 1h1.5M7 8h1.5" stroke="#8d9096" stroke-width="1" fill="none"/><rect x="3.8" y="2.5" width="2.4" height="4" fill="#8d9096"/></svg>
<div class="t" style="right:976px;top:461.69px;font-size:12.4px;line-height:14.88px;font-weight:400;color:#2f3237;"><span class="u">13</span></div>
<svg class="a" style="left:948px;top:463px" width="10" height="9" viewBox="0 0 10 9"><path d="M1.5 1v7M8.5 1v7M1.5 1h1.5M1.5 8h1.5M7 1h1.5M7 8h1.5" stroke="#8d9096" stroke-width="1" fill="none"/><rect x="3.8" y="2.5" width="2.4" height="4" fill="#8d9096"/></svg>
<div class="t" style="right:848px;top:461.69px;font-size:12.4px;line-height:14.88px;font-weight:400;color:#2f3237;"><span class="u">$888.18</span></div>
<svg class="a" style="left:1076px;top:463px" width="10" height="9" viewBox="0 0 10 9"><path d="M1.5 1v7M8.5 1v7M1.5 1h1.5M1.5 8h1.5M7 1h1.5M7 8h1.5" stroke="#8d9096" stroke-width="1" fill="none"/><rect x="3.8" y="2.5" width="2.4" height="4" fill="#8d9096"/></svg>
<div class="t" style="right:720px;top:461.69px;font-size:12.4px;line-height:14.88px;font-weight:400;color:#2f3237;"><span class="u">$888.18</span></div>
<svg class="a" style="left:1204px;top:463px" width="10" height="9" viewBox="0 0 10 9"><path d="M1.5 1v7M8.5 1v7M1.5 1h1.5M1.5 8h1.5M7 1h1.5M7 8h1.5" stroke="#8d9096" stroke-width="1" fill="none"/><rect x="3.8" y="2.5" width="2.4" height="4" fill="#8d9096"/></svg>
<div class="t" style="right:592px;top:461.69px;font-size:12.4px;line-height:14.88px;font-weight:400;color:#2f3237;"><span class="u">2.47</span></div>
<svg class="a" style="left:1332px;top:463px" width="10" height="9" viewBox="0 0 10 9"><path d="M1.5 1v7M8.5 1v7M1.5 1h1.5M1.5 8h1.5M7 1h1.5M7 8h1.5" stroke="#8d9096" stroke-width="1" fill="none"/><rect x="3.8" y="2.5" width="2.4" height="4" fill="#8d9096"/></svg>
<div class="t" style="right:464px;top:461.69px;font-size:12.4px;line-height:14.88px;font-weight:400;color:#2f3237;"><span class="u">2.47</span></div>
<svg class="a" style="left:1460px;top:463px" width="10" height="9" viewBox="0 0 10 9"><path d="M1.5 1v7M8.5 1v7M1.5 1h1.5M1.5 8h1.5M7 1h1.5M7 8h1.5" stroke="#8d9096" stroke-width="1" fill="none"/><rect x="3.8" y="2.5" width="2.4" height="4" fill="#8d9096"/></svg>
<div class="t" style="right:336px;top:461.69px;font-size:12.4px;line-height:14.88px;font-weight:400;color:#2f3237;"><span class="u">8</span></div>
<svg class="a" style="left:1588px;top:463px" width="10" height="9" viewBox="0 0 10 9"><path d="M1.5 1v7M8.5 1v7M1.5 1h1.5M1.5 8h1.5M7 1h1.5M7 8h1.5" stroke="#8d9096" stroke-width="1" fill="none"/><rect x="3.8" y="2.5" width="2.4" height="4" fill="#8d9096"/></svg>
<div class="t" style="right:208px;top:461.69px;font-size:12.4px;line-height:14.88px;font-weight:400;color:#2f3237;"><span class="u">8</span></div>
<svg class="a" style="left:1716px;top:463px" width="10" height="9" viewBox="0 0 10 9"><path d="M1.5 1v7M8.5 1v7M1.5 1h1.5M1.5 8h1.5M7 1h1.5M7 8h1.5" stroke="#8d9096" stroke-width="1" fill="none"/><rect x="3.8" y="2.5" width="2.4" height="4" fill="#8d9096"/></svg>
<div class="a" style="left:196px;top:506.65999999999997px;width:21px;height:21.0px;background:#ffffff;border-radius:4px;border:1.5px solid #e2e2e2"></div>
<div class="a" style="left:249px;top:506.65999999999997px;width:34px;height:20.0px;background:#e8ecf2;border-radius:10px;"></div>
<svg class="a" style="left:261px;top:506px" width="22" height="21" viewBox="0 0 22 21"><circle cx="11" cy="10.5" r="9" fill="#1877f2"/></svg>
<div class="t" style="left:314px;top:500.45px;font-size:11.98px;line-height:14.38px;font-weight:400;color:#3f7bdc;">ES | Website Visits 180</div>
<div class="t" style="right:1219px;top:501.99px;font-size:12.45px;line-height:14.94px;font-weight:400;color:#2f3237;">$235.90</div>
<div class="t" style="right:1104px;top:502.02px;font-size:12.4px;line-height:14.88px;font-weight:400;color:#2f3237;"><span class="u">4</span></div>
<svg class="a" style="left:820px;top:503px" width="10" height="9" viewBox="0 0 10 9"><path d="M1.5 1v7M8.5 1v7M1.5 1h1.5M1.5 8h1.5M7 1h1.5M7 8h1.5" stroke="#8d9096" stroke-width="1" fill="none"/><rect x="3.8" y="2.5" width="2.4" height="4" fill="#8d9096"/></svg>
<div class="t" style="right:976px;top:502.02px;font-size:12.4px;line-height:14.88px;font-weight:400;color:#2f3237;"><span class="u">4</span></div>
<svg class="a" style="left:948px;top:503px" width="10" height="9" viewBox="0 0 10 9"><path d="M1.5 1v7M8.5 1v7M1.5 1h1.5M1.5 8h1.5M7 1h1.5M7 8h1.5" stroke="#8d9096" stroke-width="1" fill="none"/><rect x="3.8" y="2.5" width="2.4" height="4" fill="#8d9096"/></svg>
<div class="t" style="right:848px;top:502.02px;font-size:12.4px;line-height:14.88px;font-weight:400;color:#2f3237;"><span class="u">$143.90</span></div>
<svg class="a" style="left:1076px;top:503px" width="10" height="9" viewBox="0 0 10 9"><path d="M1.5 1v7M8.5 1v7M1.5 1h1.5M1.5 8h1.5M7 1h1.5M7 8h1.5" stroke="#8d9096" stroke-width="1" fill="none"/><rect x="3.8" y="2.5" width="2.4" height="4" fill="#8d9096"/></svg>
<div class="t" style="right:720px;top:502.02px;font-size:12.4px;line-height:14.88px;font-weight:400;color:#2f3237;"><span class="u">$143.90</span></div>
<svg class="a" style="left:1204px;top:503px" width="10" height="9" viewBox="0 0 10 9"><path d="M1.5 1v7M8.5 1v7M1.5 1h1.5M1.5 8h1.5M7 1h1.5M7 8h1.5" stroke="#8d9096" stroke-width="1" fill="none"/><rect x="3.8" y="2.5" width="2.4" height="4" fill="#8d9096"/></svg>
<div class="t" style="right:592px;top:502.02px;font-size:12.4px;line-height:14.88px;font-weight:400;color:#2f3237;"><span class="u">0.61</span></div>
<svg class="a" style="left:1332px;top:503px" width="10" height="9" viewBox="0 0 10 9"><path d="M1.5 1v7M8.5 1v7M1.5 1h1.5M1.5 8h1.5M7 1h1.5M7 8h1.5" stroke="#8d9096" stroke-width="1" fill="none"/><rect x="3.8" y="2.5" width="2.4" height="4" fill="#8d9096"/></svg>
<div class="t" style="right:464px;top:502.02px;font-size:12.4px;line-height:14.88px;font-weight:400;color:#2f3237;"><span class="u">0.61</span></div>
<svg class="a" style="left:1460px;top:503px" width="10" height="9" viewBox="0 0 10 9"><path d="M1.5 1v7M8.5 1v7M1.5 1h1.5M1.5 8h1.5M7 1h1.5M7 8h1.5" stroke="#8d9096" stroke-width="1" fill="none"/><rect x="3.8" y="2.5" width="2.4" height="4" fill="#8d9096"/></svg>
<div class="t" style="right:336px;top:502.02px;font-size:12.4px;line-height:14.88px;font-weight:400;color:#2f3237;"><span class="u">2</span></div>
<svg class="a" style="left:1588px;top:503px" width="10" height="9" viewBox="0 0 10 9"><path d="M1.5 1v7M8.5 1v7M1.5 1h1.5M1.5 8h1.5M7 1h1.5M7 8h1.5" stroke="#8d9096" stroke-width="1" fill="none"/><rect x="3.8" y="2.5" width="2.4" height="4" fill="#8d9096"/></svg>
<div class="t" style="right:208px;top:502.02px;font-size:12.4px;line-height:14.88px;font-weight:400;color:#2f3237;"><span class="u">2</span></div>
<svg class="a" style="left:1716px;top:503px" width="10" height="9" viewBox="0 0 10 9"><path d="M1.5 1v7M8.5 1v7M1.5 1h1.5M1.5 8h1.5M7 1h1.5M7 8h1.5" stroke="#8d9096" stroke-width="1" fill="none"/><rect x="3.8" y="2.5" width="2.4" height="4" fill="#8d9096"/></svg>
<div class="a" style="left:196px;top:546.49px;width:21px;height:21.0px;background:#ffffff;border-radius:4px;border:1.5px solid #e2e2e2"></div>
<svg class="a" style="left:199px;top:550.49px" width="15" height="12" viewBox="0 0 15 12"><path d="M2 6.5l3.5 3.5 7.5-8" fill="none" stroke="#1b74e4" stroke-width="1.8"/></svg>
<div class="a" style="left:249px;top:540.99px;width:34px;height:20.0px;background:#e8ecf2;border-radius:10px;"></div>
<svg class="a" style="left:261px;top:540px" width="22" height="21" viewBox="0 0 22 21"><circle cx="11" cy="10.5" r="9" fill="#1877f2"/></svg>
<div class="t" style="left:314px;top:540.78px;font-size:11.98px;line-height:14.38px;font-weight:400;color:#3f7bdc;">ES_Fitness_Wellness</div>
<div class="t" style="right:1219px;top:542.32px;font-size:12.45px;line-height:14.94px;font-weight:400;color:#2f3237;">$221.89</div>
<div class="t" style="right:1104px;top:542.35px;font-size:12.4px;line-height:14.88px;font-weight:400;color:#2f3237;"><span class="u">9</span></div>
<svg class="a" style="left:820px;top:543px" width="10" height="9" viewBox="0 0 10 9"><path d="M1.5 1v7M8.5 1v7M1.5 1h1.5M1.5 8h1.5M7 1h1.5M7 8h1.5" stroke="#8d9096" stroke-width="1" fill="none"/><rect x="3.8" y="2.5" width="2.4" height="4" fill="#8d9096"/></svg>
<div class="t" style="right:976px;top:542.35px;font-size:12.4px;line-height:14.88px;font-weight:400;color:#2f3237;"><span class="u">9</span></div>
<svg class="a" style="left:948px;top:543px" width="10" height="9" viewBox="0 0 10 9"><path d="M1.5 1v7M8.5 1v7M1.5 1h1.5M1.5 8h1.5M7 1h1.5M7 8h1.5" stroke="#8d9096" stroke-width="1" fill="none"/><rect x="3.8" y="2.5" width="2.4" height="4" fill="#8d9096"/></svg>
<div class="t" style="right:848px;top:542.35px;font-size:12.4px;line-height:14.88px;font-weight:400;color:#2f3237;"><span class="u">$435.49</span></div>
<svg class="a" style="left:1076px;top:543px" width="10" height="9" viewBox="0 0 10 9"><path d="M1.5 1v7M8.5 1v7M1.5 1h1.5M1.5 8h1.5M7 1h1.5M7 8h1.5" stroke="#8d9096" stroke-width="1" fill="none"/><rect x="3.8" y="2.5" width="2.4" height="4" fill="#8d9096"/></svg>
<div class="t" style="right:720px;top:542.35px;font-size:12.4px;line-height:14.88px;font-weight:400;color:#2f3237;"><span class="u">$435.49</span></div>
<svg class="a" style="left:1204px;top:543px" width="10" height="9" viewBox="0 0 10 9"><path d="M1.5 1v7M8.5 1v7M1.5 1h1.5M1.5 8h1.5M7 1h1.5M7 8h1.5" stroke="#8d9096" stroke-width="1" fill="none"/><rect x="3.8" y="2.5" width="2.4" height="4" fill="#8d9096"/></svg>
<div class="t" style="right:592px;top:542.35px;font-size:12.4px;line-height:14.88px;font-weight:400;color:#2f3237;"><span class="u">1.96</span></div>
<svg class="a" style="left:1332px;top:543px" width="10" height="9" viewBox="0 0 10 9"><path d="M1.5 1v7M8.5 1v7M1.5 1h1.5M1.5 8h1.5M7 1h1.5M7 8h1.5" stroke="#8d9096" stroke-width="1" fill="none"/><rect x="3.8" y="2.5" width="2.4" height="4" fill="#8d9096"/></svg>
<div class="t" style="right:464px;top:542.35px;font-size:12.4px;line-height:14.88px;font-weight:400;color:#2f3237;"><span class="u">1.96</span></div>
<svg class="a" style="left:1460px;top:543px" width="10" height="9" viewBox="0 0 10 9"><path d="M1.5 1v7M8.5 1v7M1.5 1h1.5M1.5 8h1.5M7 1h1.5M7 8h1.5" stroke="#8d9096" stroke-width="1" fill="none"/><rect x="3.8" y="2.5" width="2.4" height="4" fill="#8d9096"/></svg>
<div class="t" style="right:336px;top:542.35px;font-size:12.4px;line-height:14.88px;font-weight:400;color:#2f3237;"><span class="u">7</span></div>
<svg class="a" style="left:1588px;top:543px" width="10" height="9" viewBox="0 0 10 9"><path d="M1.5 1v7M8.5 1v7M1.5 1h1.5M1.5 8h1.5M7 1h1.5M7 8h1.5" stroke="#8d9096" stroke-width="1" fill="none"/><rect x="3.8" y="2.5" width="2.4" height="4" fill="#8d9096"/></svg>
<div class="t" style="right:208px;top:542.35px;font-size:12.4px;line-height:14.88px;font-weight:400;color:#2f3237;"><span class="u">7</span></div>
<svg class="a" style="left:1716px;top:543px" width="10" height="9" viewBox="0 0 10 9"><path d="M1.5 1v7M8.5 1v7M1.5 1h1.5M1.5 8h1.5M7 1h1.5M7 8h1.5" stroke="#8d9096" stroke-width="1" fill="none"/><rect x="3.8" y="2.5" width="2.4" height="4" fill="#8d9096"/></svg>
<div class="a" style="left:196px;top:587.3199999999999px;width:21px;height:21.0px;background:#ffffff;border-radius:4px;border:1.5px solid #e2e2e2"></div>
<div class="a" style="left:249px;top:587.3199999999999px;width:34px;height:20.0px;background:#e8ecf2;border-radius:10px;"></div>
<svg class="a" style="left:261px;top:587px" width="22" height="21" viewBox="0 0 22 21"><circle cx="11" cy="10.5" r="9" fill="#1877f2"/></svg>
<div class="t" style="left:314px;top:581.11px;font-size:11.98px;line-height:14.38px;font-weight:400;color:#3f7bdc;">ES_interest_facial</div>
<div class="t" style="right:1219px;top:582.65px;font-size:12.45px;line-height:14.94px;font-weight:400;color:#2f3237;">$99.62</div>
<div class="t" style="right:1104px;top:582.68px;font-size:12.4px;line-height:14.88px;font-weight:400;color:#2f3237;"><span class="u">3</span></div>
<svg class="a" style="left:820px;top:584px" width="10" height="9" viewBox="0 0 10 9"><path d="M1.5 1v7M8.5 1v7M1.5 1h1.5M1.5 8h1.5M7 1h1.5M7 8h1.5" stroke="#8d9096" stroke-width="1" fill="none"/><rect x="3.8" y="2.5" width="2.4" height="4" fill="#8d9096"/></svg>
<div class="t" style="right:976px;top:582.68px;font-size:12.4px;line-height:14.88px;font-weight:400;color:#2f3237;"><span class="u">3</span></div>
<svg class="a" style="left:948px;top:584px" width="10" height="9" viewBox="0 0 10 9"><path d="M1.5 1v7M8.5 1v7M1.5 1h1.5M1.5 8h1.5M7 1h1.5M7 8h1.5" stroke="#8d9096" stroke-width="1" fill="none"/><rect x="3.8" y="2.5" width="2.4" height="4" fill="#8d9096"/></svg>
<div class="t" style="right:848px;top:582.68px;font-size:12.4px;line-height:14.88px;font-weight:400;color:#2f3237;"><span class="u">$235.33</span></div>
<svg class="a" style="left:1076px;top:584px" width="10" height="9" viewBox="0 0 10 9"><path d="M1.5 1v7M8.5 1v7M1.5 1h1.5M1.5 8h1.5M7 1h1.5M7 8h1.5" stroke="#8d9096" stroke-width="1" fill="none"/><rect x="3.8" y="2.5" width="2.4" height="4" fill="#8d9096"/></svg>
<div class="t" style="right:720px;top:582.68px;font-size:12.4px;line-height:14.88px;font-weight:400;color:#2f3237;"><span class="u">$235.33</span></div>
<svg class="a" style="left:1204px;top:584px" width="10" height="9" viewBox="0 0 10 9"><path d="M1.5 1v7M8.5 1v7M1.5 1h1.5M1.5 8h1.5M7 1h1.5M7 8h1.5" stroke="#8d9096" stroke-width="1" fill="none"/><rect x="3.8" y="2.5" width="2.4" height="4" fill="#8d9096"/></svg>
<div class="t" style="right:592px;top:582.68px;font-size:12.4px;line-height:14.88px;font-weight:400;color:#2f3237;"><span class="u">2.36</span></div>
<svg class="a" style="left:1332px;top:584px" width="10" height="9" viewBox="0 0 10 9"><path d="M1.5 1v7M8.5 1v7M1.5 1h1.5M1.5 8h1.5M7 1h1.5M7 8h1.5" stroke="#8d9096" stroke-width="1" fill="none"/><rect x="3.8" y="2.5" width="2.4" height="4" fill="#8d9096"/></svg>
<div class="t" style="right:464px;top:582.68px;font-size:12.4px;line-height:14.88px;font-weight:400;color:#2f3237;"><span class="u">2.36</span></div>
<svg class="a" style="left:1460px;top:584px" width="10" height="9" viewBox="0 0 10 9"><path d="M1.5 1v7M8.5 1v7M1.5 1h1.5M1.5 8h1.5M7 1h1.5M7 8h1.5" stroke="#8d9096" stroke-width="1" fill="none"/><rect x="3.8" y="2.5" width="2.4" height="4" fill="#8d9096"/></svg>
<div class="t" style="right:336px;top:582.68px;font-size:12.4px;line-height:14.88px;font-weight:400;color:#2f3237;"><span class="u">2</span></div>
<svg class="a" style="left:1588px;top:584px" width="10" height="9" viewBox="0 0 10 9"><path d="M1.5 1v7M8.5 1v7M1.5 1h1.5M1.5 8h1.5M7 1h1.5M7 8h1.5" stroke="#8d9096" stroke-width="1" fill="none"/><rect x="3.8" y="2.5" width="2.4" height="4" fill="#8d9096"/></svg>
<div class="t" style="right:208px;top:582.68px;font-size:12.4px;line-height:14.88px;font-weight:400;color:#2f3237;"><span class="u">2</span></div>
<svg class="a" style="left:1716px;top:584px" width="10" height="9" viewBox="0 0 10 9"><path d="M1.5 1v7M8.5 1v7M1.5 1h1.5M1.5 8h1.5M7 1h1.5M7 8h1.5" stroke="#8d9096" stroke-width="1" fill="none"/><rect x="3.8" y="2.5" width="2.4" height="4" fill="#8d9096"/></svg>
<div class="a" style="left:692px;top:629px;width:8px;height:2px;background:#a3a6aa;border-radius:0px;"></div>
<div class="a" style="left:820px;top:629px;width:8px;height:2px;background:#a3a6aa;border-radius:0px;"></div>
<div class="a" style="left:948px;top:629px;width:8px;height:2px;background:#a3a6aa;border-radius:0px;"></div>
<div class="t" style="right:835px;top:623.01px;font-size:12.4px;line-height:14.88px;font-weight:400;color:#2f3237;">$0.00</div>
<div class="t" style="right:707px;top:623.01px;font-size:12.4px;line-height:14.88px;font-weight:400;color:#2f3237;">$0.00</div>
<div class="a" style="left:1332px;top:629px;width:8px;height:2px;background:#a3a6aa;border-radius:0px;"></div>
<div class="a" style="left:1460px;top:629px;width:8px;height:2px;background:#a3a6aa;border-radius:0px;"></div>
<div class="a" style="left:1588px;top:629px;width:8px;height:2px;background:#a3a6aa;border-radius:0px;"></div>
<div class="a" style="left:1716px;top:629px;width:8px;height:2px;background:#a3a6aa;border-radius:0px;"></div>
<div class="a" style="left:692px;top:669px;width:8px;height:2px;background:#a3a6aa;border-radius:0px;"></div>
<div class="a" style="left:820px;top:669px;width:8px;height:2px;background:#a3a6aa;border-radius:0px;"></div>
<div class="a" style="left:948px;top:669px;width:8px;height:2px;background:#a3a6aa;border-radius:0px;"></div>
<div class="t" style="right:835px;top:663.34px;font-size:12.4px;line-height:14.88px;font-weight:400;color:#2f3237;">$0.00</div>
<div class="t" style="right:707px;top:663.34px;font-size:12.4px;line-height:14.88px;font-weight:400;color:#2f3237;">$0.00</div>
<div class="a" style="left:1332px;top:669px;width:8px;height:2px;background:#a3a6aa;border-radius:0px;"></div>
<div class="a" style="left:1460px;top:669px;width:8px;height:2px;background:#a3a6aa;border-radius:0px;"></div>
<div class="a" style="left:1588px;top:669px;width:8px;height:2px;background:#a3a6aa;border-radius:0px;"></div>
<div class="a" style="left:1716px;top:669px;width:8px;height:2px;background:#a3a6aa;border-radius:0px;"></div>
<div class="a" style="left:692px;top:709px;width:8px;height:2px;background:#a3a6aa;border-radius:0px;"></div>
<div class="a" style="left:820px;top:709px;width:8px;height:2px;background:#a3a6aa;border-radius:0px;"></div>
<div class="a" style="left:948px;top:709px;width:8px;height:2px;background:#a3a6aa;border-radius:0px;"></div>
<div class="t" style="right:835px;top:703.67px;font-size:12.4px;line-height:14.88px;font-weight:400;color:#2f3237;">$0.00</div>
<div class="t" style="right:707px;top:703.67px;font-size:12.4px;line-height:14.88px;font-weight:400;color:#2f3237;">$0.00</div>
<div class="a" style="left:1332px;top:709px;width:8px;height:2px;background:#a3a6aa;border-radius:0px;"></div>
<div class="a" style="left:1460px;top:709px;width:8px;height:2px;background:#a3a6aa;border-radius:0px;"></div>
<div class="a" style="left:1588px;top:709px;width:8px;height:2px;background:#a3a6aa;border-radius:0px;"></div>
<div class="a" style="left:1716px;top:709px;width:8px;height:2px;background:#a3a6aa;border-radius:0px;"></div>
<div class="a" style="left:692px;top:750px;width:8px;height:2px;background:#a3a6aa;border-radius:0px;"></div>
<div class="a" style="left:820px;top:750px;width:8px;height:2px;background:#a3a6aa;border-radius:0px;"></div>
<div class="a" style="left:948px;top:750px;width:8px;height:2px;background:#a3a6aa;border-radius:0px;"></div>
<div class="t" style="right:835px;top:744.00px;font-size:12.4px;line-height:14.88px;font-weight:400;color:#2f3237;">$0.00</div>
<div class="t" style="right:707px;top:744.00px;font-size:12.4px;line-height:14.88px;font-weight:400;color:#2f3237;">$0.00</div>
<div class="a" style="left:1332px;top:750px;width:8px;height:2px;background:#a3a6aa;border-radius:0px;"></div>
<div class="a" style="left:1460px;top:750px;width:8px;height:2px;background:#a3a6aa;border-radius:0px;"></div>
<div class="a" style="left:1588px;top:750px;width:8px;height:2px;background:#a3a6aa;border-radius:0px;"></div>
<div class="a" style="left:1716px;top:750px;width:8px;height:2px;background:#a3a6aa;border-radius:0px;"></div>
<div class="a" style="left:692px;top:790px;width:8px;height:2px;background:#a3a6aa;border-radius:0px;"></div>
<div class="a" style="left:820px;top:790px;width:8px;height:2px;background:#a3a6aa;border-radius:0px;"></div>
<div class="a" style="left:948px;top:790px;width:8px;height:2px;background:#a3a6aa;border-radius:0px;"></div>
<div class="t" style="right:835px;top:784.33px;font-size:12.4px;line-height:14.88px;font-weight:400;color:#2f3237;">$0.00</div>
<div class="t" style="right:707px;top:784.33px;font-size:12.4px;line-height:14.88px;font-weight:400;color:#2f3237;">$0.00</div>
<div class="a" style="left:1332px;top:790px;width:8px;height:2px;background:#a3a6aa;border-radius:0px;"></div>
<div class="a" style="left:1460px;top:790px;width:8px;height:2px;background:#a3a6aa;border-radius:0px;"></div>
<div class="a" style="left:1588px;top:790px;width:8px;height:2px;background:#a3a6aa;border-radius:0px;"></div>
<div class="a" style="left:1716px;top:790px;width:8px;height:2px;background:#a3a6aa;border-radius:0px;"></div>
<div class="t" style="right:1219px;top:824.63px;font-size:12.45px;line-height:14.94px;font-weight:400;color:#2f3237;">$43.71</div>
<div class="t" style="right:1104px;top:824.66px;font-size:12.4px;line-height:14.88px;font-weight:400;color:#2f3237;"><span class="u">1</span></div>
<svg class="a" style="left:820px;top:826px" width="10" height="9" viewBox="0 0 10 9"><path d="M1.5 1v7M8.5 1v7M1.5 1h1.5M1.5 8h1.5M7 1h1.5M7 8h1.5" stroke="#8d9096" stroke-width="1" fill="none"/><rect x="3.8" y="2.5" width="2.4" height="4" fill="#8d9096"/></svg>
<div class="t" style="right:976px;top:824.66px;font-size:12.4px;line-height:14.88px;font-weight:400;color:#2f3237;"><span class="u">1</span></div>
<svg class="a" style="left:948px;top:826px" width="10" height="9" viewBox="0 0 10 9"><path d="M1.5 1v7M8.5 1v7M1.5 1h1.5M1.5 8h1.5M7 1h1.5M7 8h1.5" stroke="#8d9096" stroke-width="1" fill="none"/><rect x="3.8" y="2.5" width="2.4" height="4" fill="#8d9096"/></svg>
<div class="t" style="right:848px;top:824.66px;font-size:12.4px;line-height:14.88px;font-weight:400;color:#2f3237;"><span class="u">$39.97</span></div>
<svg class="a" style="left:1076px;top:826px" width="10" height="9" viewBox="0 0 10 9"><path d="M1.5 1v7M8.5 1v7M1.5 1h1.5M1.5 8h1.5M7 1h1.5M7 8h1.5" stroke="#8d9096" stroke-width="1" fill="none"/><rect x="3.8" y="2.5" width="2.4" height="4" fill="#8d9096"/></svg>
<div class="t" style="right:720px;top:824.66px;font-size:12.4px;line-height:14.88px;font-weight:400;color:#2f3237;"><span class="u">$39.97</span></div>
<svg class="a" style="left:1204px;top:826px" width="10" height="9" viewBox="0 0 10 9"><path d="M1.5 1v7M8.5 1v7M1.5 1h1.5M1.5 8h1.5M7 1h1.5M7 8h1.5" stroke="#8d9096" stroke-width="1" fill="none"/><rect x="3.8" y="2.5" width="2.4" height="4" fill="#8d9096"/></svg>
<div class="t" style="right:592px;top:824.66px;font-size:12.4px;line-height:14.88px;font-weight:400;color:#2f3237;"><span class="u">0.91</span></div>
<svg class="a" style="left:1332px;top:826px" width="10" height="9" viewBox="0 0 10 9"><path d="M1.5 1v7M8.5 1v7M1.5 1h1.5M1.5 8h1.5M7 1h1.5M7 8h1.5" stroke="#8d9096" stroke-width="1" fill="none"/><rect x="3.8" y="2.5" width="2.4" height="4" fill="#8d9096"/></svg>
<div class="t" style="right:464px;top:824.66px;font-size:12.4px;line-height:14.88px;font-weight:400;color:#2f3237;"><span class="u">0.91</span></div>
<svg class="a" style="left:1460px;top:826px" width="10" height="9" viewBox="0 0 10 9"><path d="M1.5 1v7M8.5 1v7M1.5 1h1.5M1.5 8h1.5M7 1h1.5M7 8h1.5" stroke="#8d9096" stroke-width="1" fill="none"/><rect x="3.8" y="2.5" width="2.4" height="4" fill="#8d9096"/></svg>
<div class="t" style="right:336px;top:824.66px;font-size:12.4px;line-height:14.88px;font-weight:400;color:#2f3237;"><span class="u">4</span></div>
<svg class="a" style="left:1588px;top:826px" width="10" height="9" viewBox="0 0 10 9"><path d="M1.5 1v7M8.5 1v7M1.5 1h1.5M1.5 8h1.5M7 1h1.5M7 8h1.5" stroke="#8d9096" stroke-width="1" fill="none"/><rect x="3.8" y="2.5" width="2.4" height="4" fill="#8d9096"/></svg>
<div class="t" style="right:208px;top:824.66px;font-size:12.4px;line-height:14.88px;font-weight:400;color:#2f3237;"><span class="u">4</span></div>
<svg class="a" style="left:1716px;top:826px" width="10" height="9" viewBox="0 0 10 9"><path d="M1.5 1v7M8.5 1v7M1.5 1h1.5M1.5 8h1.5M7 1h1.5M7 8h1.5" stroke="#8d9096" stroke-width="1" fill="none"/><rect x="3.8" y="2.5" width="2.4" height="4" fill="#8d9096"/></svg>
<div class="a" style="left:692px;top:871px;width:8px;height:2px;background:#a3a6aa;border-radius:0px;"></div>
<div class="a" style="left:820px;top:871px;width:8px;height:2px;background:#a3a6aa;border-radius:0px;"></div>
<div class="a" style="left:948px;top:871px;width:8px;height:2px;background:#a3a6aa;border-radius:0px;"></div>
<div class="t" style="right:835px;top:864.99px;font-size:12.4px;line-height:14.88px;font-weight:400;color:#2f3237;">$0.00</div>
<div class="t" style="right:707px;top:864.99px;font-size:12.4px;line-height:14.88px;font-weight:400;color:#2f3237;">$0.00</div>
<div class="a" style="left:1332px;top:871px;width:8px;height:2px;background:#a3a6aa;border-radius:0px;"></div>
<div class="a" style="left:1460px;top:871px;width:8px;height:2px;background:#a3a6aa;border-radius:0px;"></div>
<div class="a" style="left:1588px;top:871px;width:8px;height:2px;background:#a3a6aa;border-radius:0px;"></div>
<div class="a" style="left:1716px;top:871px;width:8px;height:2px;background:#a3a6aa;border-radius:0px;"></div>
<div class="t" style="left:314px;top:907.97px;font-size:11.67px;line-height:14.0px;font-weight:700;color:#1c1e21;">Results from 12 ad sets</div>
<svg class="a" style="left:448px;top:908px" width="12" height="12" viewBox="0 0 12 12"><circle cx="6" cy="6" r="5.2" fill="#3a3b3c"/><rect x="5.2" y="5" width="1.6" height="4" fill="#fff"/><circle cx="6" cy="3.3" r=".9" fill="#fff"/></svg>
<div class="t" style="right:1214px;top:907.58px;font-size:12.36px;line-height:14.83px;font-weight:700;color:#1c1e21;">$1,259.17</div>
<div class="t" style="right:1214px;top:927.18px;font-size:10.39px;line-height:12.47px;font-weight:400;color:#8d9096;">Total Spent</div>
<div class="t" style="right:1099px;top:908.11px;font-size:12.3px;line-height:14.76px;font-weight:700;color:#1c1e21;"><span class="u">48</span></div>
<svg class="a" style="left:825px;top:909px" width="10" height="9" viewBox="0 0 10 9"><path d="M1.5 1v7M8.5 1v7M1.5 1h1.5M1.5 8h1.5M7 1h1.5M7 8h1.5" stroke="#8d9096" stroke-width="1" fill="none"/><rect x="3.8" y="2.5" width="2.4" height="4" fill="#8d9096"/></svg>
<div class="t" style="right:1099px;top:927.18px;font-size:10.39px;line-height:12.47px;font-weight:400;color:#8d9096;">Total</div>
<div class="t" style="right:971px;top:908.11px;font-size:12.3px;line-height:14.76px;font-weight:700;color:#1c1e21;"><span class="u">48</span></div>
<svg class="a" style="left:953px;top:909px" width="10" height="9" viewBox="0 0 10 9"><path d="M1.5 1v7M8.5 1v7M1.5 1h1.5M1.5 8h1.5M7 1h1.5M7 8h1.5" stroke="#8d9096" stroke-width="1" fill="none"/><rect x="3.8" y="2.5" width="2.4" height="4" fill="#8d9096"/></svg>
<div class="t" style="right:971px;top:927.18px;font-size:10.39px;line-height:12.47px;font-weight:400;color:#8d9096;">Total</div>
<div class="t" style="right:843px;top:908.11px;font-size:12.3px;line-height:14.76px;font-weight:700;color:#1c1e21;"><span class="u">$2,517.53</span></div>
<svg class="a" style="left:1081px;top:909px" width="10" height="9" viewBox="0 0 10 9"><path d="M1.5 1v7M8.5 1v7M1.5 1h1.5M1.5 8h1.5M7 1h1.5M7 8h1.5" stroke="#8d9096" stroke-width="1" fill="none"/><rect x="3.8" y="2.5" width="2.4" height="4" fill="#8d9096"/></svg>
<div class="t" style="right:843px;top:927.18px;font-size:10.39px;line-height:12.47px;font-weight:400;color:#8d9096;">Total</div>
<div class="t" style="right:715px;top:908.11px;font-size:12.3px;line-height:14.76px;font-weight:700;color:#1c1e21;"><span class="u">$2,517.53</span></div>
<svg class="a" style="left:1209px;top:909px" width="10" height="9" viewBox="0 0 10 9"><path d="M1.5 1v7M8.5 1v7M1.5 1h1.5M1.5 8h1.5M7 1h1.5M7 8h1.5" stroke="#8d9096" stroke-width="1" fill="none"/><rect x="3.8" y="2.5" width="2.4" height="4" fill="#8d9096"/></svg>
<div class="t" style="right:715px;top:927.18px;font-size:10.39px;line-height:12.47px;font-weight:400;color:#8d9096;">Total</div>
<div class="t" style="right:587px;top:908.11px;font-size:12.3px;line-height:14.76px;font-weight:700;color:#1c1e21;"><span class="u">2.00</span></div>
<svg class="a" style="left:1337px;top:909px" width="10" height="9" viewBox="0 0 10 9"><path d="M1.5 1v7M8.5 1v7M1.5 1h1.5M1.5 8h1.5M7 1h1.5M7 8h1.5" stroke="#8d9096" stroke-width="1" fill="none"/><rect x="3.8" y="2.5" width="2.4" height="4" fill="#8d9096"/></svg>
<div class="t" style="right:587px;top:927.18px;font-size:10.39px;line-height:12.47px;font-weight:400;color:#8d9096;">Average</div>
<div class="t" style="right:459px;top:908.11px;font-size:12.3px;line-height:14.76px;font-weight:700;color:#1c1e21;"><span class="u">2.00</span></div>
<svg class="a" style="left:1465px;top:909px" width="10" height="9" viewBox="0 0 10 9"><path d="M1.5 1v7M8.5 1v7M1.5 1h1.5M1.5 8h1.5M7 1h1.5M7 8h1.5" stroke="#8d9096" stroke-width="1" fill="none"/><rect x="3.8" y="2.5" width="2.4" height="4" fill="#8d9096"/></svg>
<div class="t" style="right:459px;top:927.18px;font-size:10.39px;line-height:12.47px;font-weight:400;color:#8d9096;">Average</div>
<div class="t" style="right:331px;top:908.11px;font-size:12.3px;line-height:14.76px;font-weight:700;color:#1c1e21;"><span class="u">30</span></div>
<svg class="a" style="left:1593px;top:909px" width="10" height="9" viewBox="0 0 10 9"><path d="M1.5 1v7M8.5 1v7M1.5 1h1.5M1.5 8h1.5M7 1h1.5M7 8h1.5" stroke="#8d9096" stroke-width="1" fill="none"/><rect x="3.8" y="2.5" width="2.4" height="4" fill="#8d9096"/></svg>
<div class="t" style="right:331px;top:927.18px;font-size:10.39px;line-height:12.47px;font-weight:400;color:#8d9096;">Total</div>
<div class="t" style="right:203px;top:908.11px;font-size:12.3px;line-height:14.76px;font-weight:700;color:#1c1e21;"><span class="u">30</span></div>
<svg class="a" style="left:1721px;top:909px" width="10" height="9" viewBox="0 0 10 9"><path d="M1.5 1v7M8.5 1v7M1.5 1h1.5M1.5 8h1.5M7 1h1.5M7 8h1.5" stroke="#8d9096" stroke-width="1" fill="none"/><rect x="3.8" y="2.5" width="2.4" height="4" fill="#8d9096"/></svg>
<div class="t" style="right:203px;top:927.18px;font-size:10.39px;line-height:12.47px;font-weight:400;color:#8d9096;">Total</div>
</div></div></body></html>
